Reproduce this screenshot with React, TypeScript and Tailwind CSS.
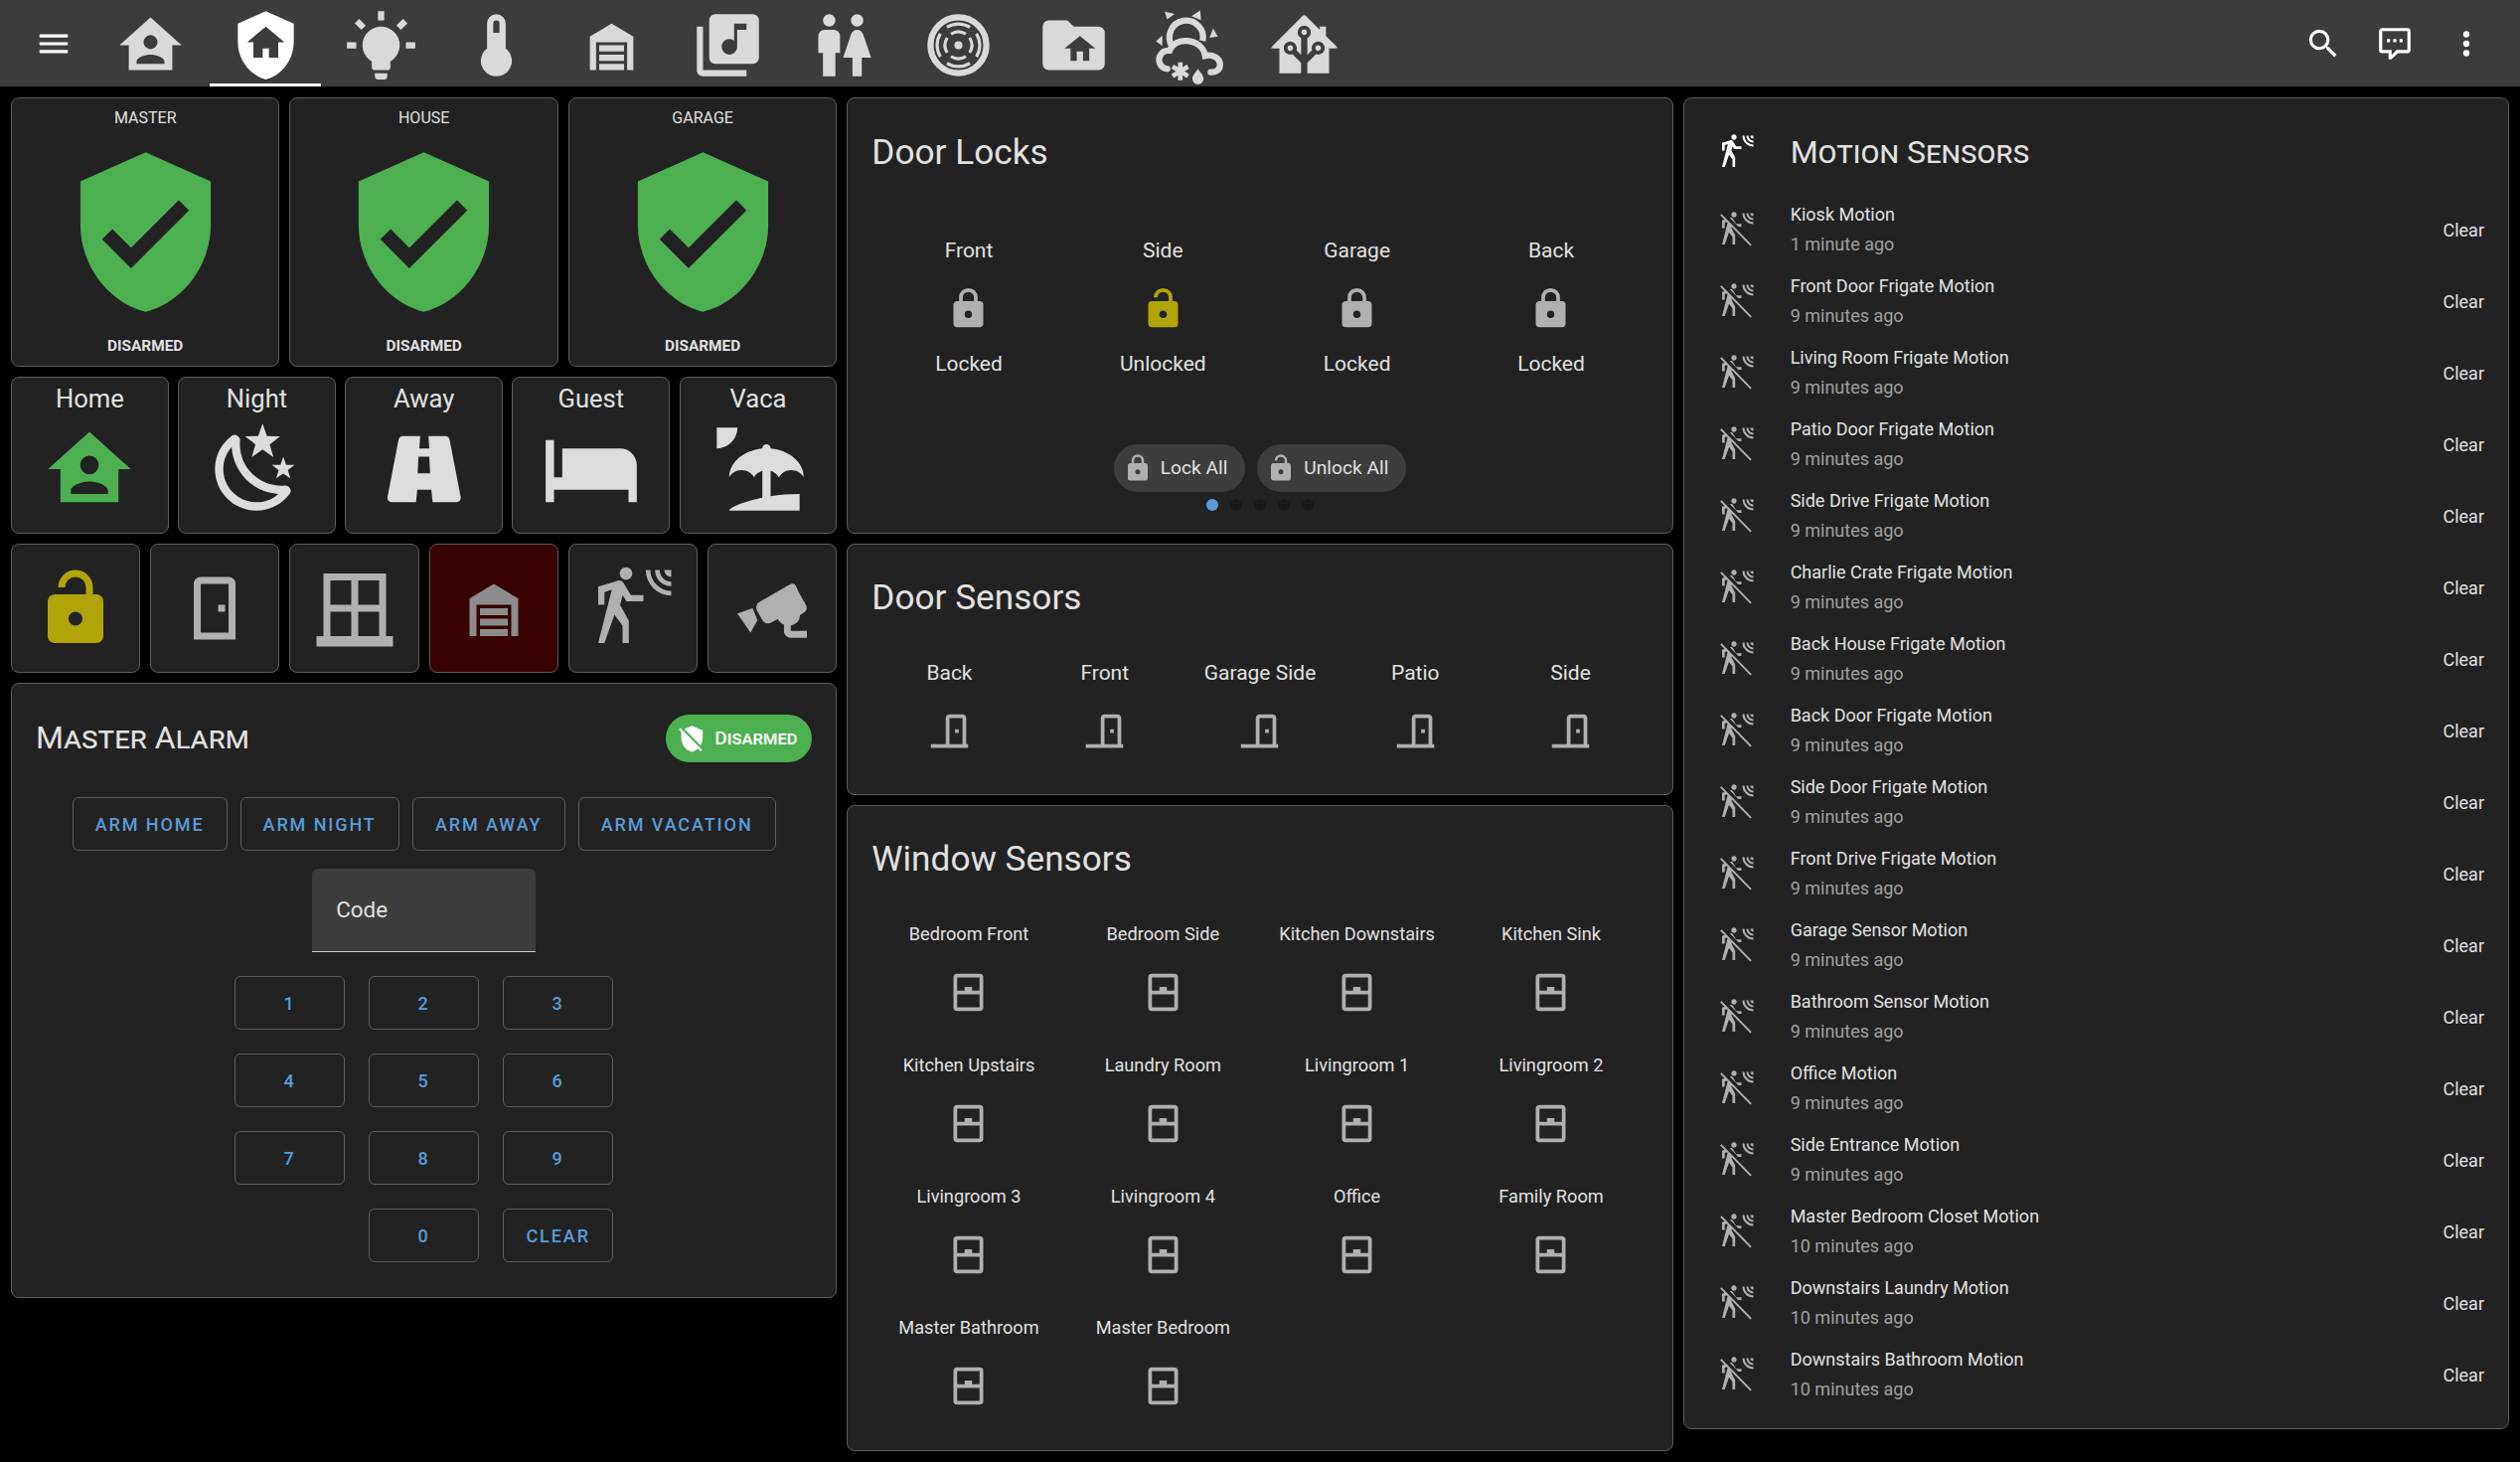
const menu = "M3,6H21V8H3V6M3,11H21V13H3V11M3,16H21V18H3V16Z"
const magnify = "M9.5,3A6.5,6.5 0 0,1 16,9.5C16,11.11 15.41,12.59 14.44,13.73L14.71,14H15.5L20.5,19L19,20.5L14,15.5V14.71L13.73,14.44C12.59,15.41 11.11,16 9.5,16A6.5,6.5 0 0,1 3,9.5A6.5,6.5 0 0,1 9.5,3M9.5,5C7,5 5,7 5,9.5C5,12 7,14 9.5,14C12,14 14,12 14,9.5C14,7 12,5 9.5,5Z"
const dots = "M12,16A2,2 0 0,1 14,18A2,2 0 0,1 12,20A2,2 0 0,1 10,18A2,2 0 0,1 12,16M12,10A2,2 0 0,1 14,12A2,2 0 0,1 12,14A2,2 0 0,1 10,12A2,2 0 0,1 12,10M12,4A2,2 0 0,1 14,6A2,2 0 0,1 12,8A2,2 0 0,1 10,6A2,2 0 0,1 12,4Z"
const comment = "M9,22A1,1 0 0,1 8,21V18H4A2,2 0 0,1 2,16V4C2,2.89 2.9,2 4,2H20A2,2 0 0,1 22,4V16A2,2 0 0,1 20,18H13.9L10.2,21.71C10,21.9 9.75,22 9.5,22V22H9M10,16V19.08L13.08,16H20V4H4V16H10M17,11H15V9H17V11M13,11H11V9H13V11M9,11H7V9H9V11Z"
const homeAccount = "M12,3L2,12H5V20H19V12H22L12,3M12,8.75A2.25,2.25 0 0,1 14.25,11A2.25,2.25 0 0,1 12,13.25A2.25,2.25 0 0,1 9.75,11A2.25,2.25 0 0,1 12,8.75M12,15C13.5,15 16.5,15.75 16.5,17.25V18H7.5V17.25C7.5,15.75 10.5,15 12,15Z"
const shieldHome = "M11 13H13V16H16V11H18L12 6L6 11H8V16H11V13M12 1L21 5V11C21 16.55 17.16 21.74 12 23C6.84 21.74 3 16.55 3 11V5L12 1Z"
const bulb = "M12,6A6,6 0 0,1 18,12C18,14.22 16.79,16.16 15,17.2V19A1,1 0 0,1 14,20H10A1,1 0 0,1 9,19V17.2C7.21,16.16 6,14.22 6,12A6,6 0 0,1 12,6M14,21V22A1,1 0 0,1 13,23H11A1,1 0 0,1 10,22V21H14M20,11H23V13H20V11M1,11H4V13H1V11M13,1V4H11V1H13M4.92,3.5L7.05,5.64L5.63,7.05L3.5,4.93L4.92,3.5M16.95,5.63L19.07,3.5L20.5,4.93L18.37,7.05L16.95,5.63Z"
const thermo = "M15 13V5A3 3 0 0 0 9 5V13A5 5 0 1 0 15 13M12 4A1 1 0 0 1 13 5V8H11V5A1 1 0 0 1 12 4Z"
const garage = "M12 5L19 9.2V20H17V11H7V20H5V9.2L12 5M8 12H16V14H8V12M8 15H16V17H8V15M8 18H16V20H8V18Z"
const music = "M20 2H8C6.9 2 6 2.9 6 4V16C6 17.1 6.9 18 8 18H20C21.1 18 22 17.1 22 16V4C22 2.9 21.1 2 20 2M18 7H15V12.5C15 13.88 13.88 15 12.5 15S10 13.88 10 12.5 11.12 10 12.5 10C13.07 10 13.58 10.19 14 10.5V5H18V7M4 6H2V20C2 21.1 2.9 22 4 22H18V20H4V6Z"
const people = "M7.5,2A2,2 0 0,1 9.5,4A2,2 0 0,1 7.5,6A2,2 0 0,1 5.5,4A2,2 0 0,1 7.5,2M6,7H9A2,2 0 0,1 11,9V14.5H9.5V22H5.5V14.5H4V9A2,2 0 0,1 6,7M16.5,2A2,2 0 0,1 18.5,4A2,2 0 0,1 16.5,6A2,2 0 0,1 14.5,4A2,2 0 0,1 16.5,2M15,22V16H12L14.59,8.41C14.84,7.59 15.6,7 16.5,7C17.4,7 18.16,7.59 18.41,8.41L21,16H18V22H15Z"
const folderHome = "M20,6H12L10,4H4A2,2 0 0,0 2,6V18A2,2 0 0,0 4,20H20A2,2 0 0,0 22,18V8A2,2 0 0,0 20,6M17,13V17H15V14H13V17H11V13H9L14,9L19,13H17Z"
const homeAssistant = "M21.8,13H20V21H13V17.67L15.79,14.88L16.5,15C17.66,15 18.6,14.06 18.6,12.9C18.6,11.74 17.66,10.8 16.5,10.8A2.1,2.1 0 0,0 14.4,12.9L14.5,13.61L13,15.13V9.65C13.66,9.29 14.1,8.6 14.1,7.8A2.1,2.1 0 0,0 12,5.7A2.1,2.1 0 0,0 9.9,7.8C9.9,8.6 10.34,9.29 11,9.65V15.13L9.5,13.61L9.6,12.9A2.1,2.1 0 0,0 7.5,10.8A2.1,2.1 0 0,0 5.4,12.9A2.1,2.1 0 0,0 7.5,15L8.21,14.88L11,17.67V21H4V13H2.25C1.83,13 1.42,13 1.42,12.79C1.43,12.57 1.85,12.15 2.28,11.72L11,3C11.33,2.67 11.67,2.33 12,2.33C12.33,2.33 12.67,2.67 13,3L17,7V6H19V9L21.78,11.78C22.18,12.18 22.59,12.59 22.6,12.8C22.6,13 22.2,13 21.8,13M7.5,12A0.9,0.9 0 0,1 8.4,12.9A0.9,0.9 0 0,1 7.5,13.8A0.9,0.9 0 0,1 6.6,12.9A0.9,0.9 0 0,1 7.5,12M16.5,12C17,12 17.4,12.4 17.4,12.9C17.4,13.4 17,13.8 16.5,13.8A0.9,0.9 0 0,1 15.6,12.9A0.9,0.9 0 0,1 16.5,12M12,6.9C12.5,6.9 12.9,7.3 12.9,7.8C12.9,8.3 12.5,8.7 12,8.7C11.5,8.7 11.1,8.3 11.1,7.8C11.1,7.3 11.5,6.9 12,6.9Z"
const shieldCheck = "M10,17L6,13L7.41,11.59L10,14.17L16.59,7.58L18,9M12,1L3,5V11C3,16.55 6.84,21.74 12,23C17.16,21.74 21,16.55 21,11V5L12,1Z"
const shieldOff = "M1,4.27L2.28,3L20.5,21.22L19.23,22.5L17,20.25C15.57,21.57 13.87,22.54 12,23C6.84,21.74 3,16.55 3,11V6.27L1,4.27M12,1L21,5V11C21,13.28 20.35,15.5 19.23,17.41L5.65,3.82L12,1Z"
const night = "M17.75,4.09L15.22,6.03L16.13,9.09L13.5,7.28L10.87,9.09L11.78,6.03L9.25,4.09L12.44,4L13.5,1L14.56,4L17.75,4.09M21.25,11L19.61,12.25L20.2,14.23L18.5,13.06L16.8,14.23L17.39,12.25L15.75,11L17.81,10.95L18.5,9L19.19,10.95L21.25,11M18.97,15.95C19.8,15.87 20.69,17.05 20.16,17.8C19.84,18.25 19.5,18.67 19.08,19.07C15.17,23 8.84,23 4.94,19.07C1.03,15.17 1.03,8.83 4.94,4.93C5.34,4.53 5.76,4.17 6.21,3.85C6.96,3.32 8.14,4.21 8.06,5.04C7.79,7.9 8.75,10.87 10.95,13.06C13.14,15.26 16.1,16.22 18.97,15.95M17.33,17.97C14.5,17.81 11.7,16.64 9.53,14.5C7.36,12.31 6.2,9.5 6.04,6.68C3.23,9.82 3.34,14.64 6.35,17.66C9.37,20.67 14.19,20.78 17.33,17.97Z"
const road = "M18.1,4.8C18,4.3 17.6,4 17.1,4H13L13.2,7H10.8L11,4H6.8C6.3,4 5.9,4.4 5.8,4.8L3.1,18.8C3,19.4 3.5,20 4.1,20H10L10.3,17H13.7L14,20H19.8C20.4,20 20.9,19.4 20.8,18.8L18.1,4.8M10.4,13L10.6,9H13.2L13.4,13H10.4Z"
const bed = "M19 7H5V14H3V5H1V20H3V17H21V20H23V11C23 8.79 21.21 7 19 7Z"
const beach = "M15,18.54C17.13,18.21 19.5,18 22,18V22H5C5,21.35 8.2,19.86 13,18.9V12.4C12.16,12.65 11.45,13.21 11,13.95C10.39,12.93 9.27,12.25 8,12.25C6.73,12.25 5.61,12.93 5,13.95C5.03,10.37 8.5,7.43 13,7.04V7A1,1 0 0,1 14,6A1,1 0 0,1 15,7V7.04C19.5,7.43 22.96,10.37 23,13.95C22.39,12.93 21.27,12.25 20,12.25C18.73,12.25 17.61,12.93 17,13.95C16.55,13.21 15.84,12.65 15,12.39V18.54M7,2A5,5 0 0,1 2,7V2H7Z"
const lockOpen = "M18,8A2,2 0 0,1 20,10V20A2,2 0 0,1 18,22H6C4.89,22 4,21.1 4,20V10A2,2 0 0,1 6,8H15V6A3,3 0 0,0 12,3A3,3 0 0,0 9,6H7A5,5 0 0,1 12,1A5,5 0 0,1 17,6V8H18M12,17A2,2 0 0,0 14,15A2,2 0 0,0 12,13A2,2 0 0,0 10,15A2,2 0 0,0 12,17Z"
const lock = "M12,17A2,2 0 0,0 14,15C14,13.89 13.1,13 12,13A2,2 0 0,0 10,15A2,2 0 0,0 12,17M18,8A2,2 0 0,1 20,10V20A2,2 0 0,1 18,22H6A2,2 0 0,1 4,20V10C4,8.89 4.9,8 6,8H7V6A5,5 0 0,1 12,1A5,5 0 0,1 17,6V8H18M12,3A3,3 0 0,0 9,6V8H15V6A3,3 0 0,0 12,3Z"
const door = "M8,3C6.89,3 6,3.89 6,5V21H18V5C18,3.89 17.11,3 16,3H8M8,5H16V19H8V5M13,11V13H15V11H13Z"
const doorClosed = "M12 3C10.89 3 10 3.89 10 5V19H2V21H22V19H21V5C21 3.89 20.11 3 19 3H12M12 5H19V19H12V5M17 11V13H15V11H17Z"
const windowClosed = "M21 20V2H3V20H1V23H23V20M19 4V11H13V4M5 4H11V11H5M5 20V13H11V20M13 20V13H19V20Z"
const windowSensor = "M6 2H18A2 2 0 0 1 20 4V20A2 2 0 0 1 18 22H6A2 2 0 0 1 4 20V4A2 2 0 0 1 6 2M6 4V11H10V9H14V11H18V4H6M6 13V20H18V13H6Z"
const motion = "M10 0.2C9 .2 8.2 1 8.2 2C8.2 3 9 3.8 10 3.8C11 3.8 11.8 3 11.8 2C11.8 1 11 .2 10 .2M15.67 1A7.33 7.33 0 0 0 23 8.33V7A6 6 0 0 1 17 1H15.67M18.33 1C18.33 3.58 20.42 5.67 23 5.67V4.33C21.15 4.33 19.67 2.85 19.67 1H18.33M21 1A2 2 0 0 0 23 3V1H21M7.92 4.03C7.75 4.03 7.58 4.06 7.42 4.11L2 5.8V11H3.8V7.33L5.91 6.67L2 22H3.8L6.67 13.89L9 17V22H10.8V15.59L8.31 11.05L9.04 8.18L10.12 10H15V8.2H11.38L9.38 4.87C9.08 4.37 8.54 4.03 7.92 4.03Z"
const cctv = "M18.15 4.94C17.77 4.91 17.37 5 17 5.2L8.43 10.15C7.5 10.69 7.18 11.87 7.72 12.8L9.22 15.4C9.75 16.32 10.94 16.64 11.86 16.1L13.6 15.1C14 15.8 14.6 16.4 15.4 16.7V18.5C15.4 19.6 16.3 20.5 17.4 20.5H22V18.5H17.4V16.9C18.1 16.8 18.8 16.4 19.3 15.9C19.8 15.4 20 14.7 20 14L21.1 13.3C21.9 12.8 22.2 11.8 21.7 11L19.6 7.3C19.3 6.6 18.8 5.1 18.15 4.94M2 13.5L6.4 12L7.8 15.4L5.8 19Z"

function Mdi({ d, className }: { d: string; className: string }) {
  return (
    <svg viewBox="0 0 24 24" className={`shrink-0 fill-current ${className}`}>
      <path d={d} />
    </svg>
  )
}

function Radar({ className }: { className: string }) {
  return (
    <svg viewBox="0 0 24 24" className={`shrink-0 fill-none stroke-current ${className}`}>
      <circle cx="12" cy="12" r="9" strokeWidth="2" />
      <circle cx="12" cy="12" r="1" className="fill-current" strokeWidth="0.6" />
      <path strokeWidth="1" d="M9.6 8.4a4.4 4.4 0 0 1 4.8 0M9.6 15.6a4.4 4.4 0 0 0 4.8 0M8.4 9.6a4.4 4.4 0 0 0 0 4.8M15.6 9.6a4.4 4.4 0 0 1 0 4.8" />
      <path strokeWidth="1" d="M8.3 6.2a7 7 0 0 1 7.4 0M8.3 17.8a7 7 0 0 0 7.4 0M6.2 8.3a7 7 0 0 0 0 7.4M17.8 8.3a7 7 0 0 1 0 7.4" />
    </svg>
  )
}

function Weather({ className }: { className: string }) {
  return (
    <svg viewBox="0 0 24 24" className={`shrink-0 overflow-visible ${className}`}>
      <path className="fill-current" d="M4.2 1.2L7.4 1.9L5 3.7ZM15.6 0.8L15.9 3.9L12.8 2.6ZM19.8 6.6L21.3 9.2L18.6 9.6ZM1.4 10.7L3.4 8.9L3.4 12.2Z" />
      <path className="fill-none stroke-current" strokeWidth="2" d="M6.6 12.4A5.4 5.4 0 1 1 16.4 10.6" />
      <path className="fill-none stroke-current" strokeWidth="2" strokeLinecap="round" d="M5 19.6C2.6 19.4 1.8 16.8 2.8 15.2C3.4 14 4.6 13.6 5.8 13.7C6.8 11.4 9 10.4 11.4 10.6C14.4 10.8 16.8 12.6 17.2 15.4C19.4 14.8 22 16 22 18.2C22 20 20.6 20.8 19 20.7" />
      <path className="fill-none stroke-current" strokeWidth="1.5" d="M9.2 17.5V23.3M6.7 18.9L11.7 21.9M6.7 21.9L11.7 18.9" />
      <path className="fill-current" d="M14.9 19.6C15.6 20.8 16.7 21.6 16.7 22.8A1.8 1.8 0 0 1 13.1 22.8C13.1 21.6 14.2 20.8 14.9 19.6Z" />
    </svg>
  )
}

function MotionOff({ className }: { className: string }) {
  return (
    <svg viewBox="0 0 24 24" className={`shrink-0 fill-current ${className}`}>
      <path d={motion} />
      <path d="M2.2 0.9L22.4 21.6" className="stroke-[#222222]" strokeWidth="2.6" />
      <path d="M1.2 1.9L21.4 22.6" className="stroke-current" strokeWidth="1.3" />
    </svg>
  )
}

function Card({ className, children }: { className: string; children?: React.ReactNode }) {
  return <div className={`rounded-[8px] border-[1.5px] border-[#5c5c5c] bg-[#222222] ${className}`}>{children}</div>
}

function OutlineButton({ label, className }: { label: string; className: string }) {
  return (
    <button className={`flex h-[54px] items-center justify-center rounded-[6px] border-[1.5px] border-[#5c5c5c] text-[18px] font-medium tracking-[1.9px] text-[#5a9bd8] ${className}`}>
      {label}
    </button>
  )
}

const tabs = [
  homeAccount,
  shieldHome,
  bulb,
  thermo,
  garage,
  music,
  people,
  "radar",
  folderHome,
  "weather",
  homeAssistant,
]

const locks = [
  { name: "Front", state: "Locked" },
  { name: "Side", state: "Unlocked" },
  { name: "Garage", state: "Locked" },
  { name: "Back", state: "Locked" },
]

const doors = ["Back", "Front", "Garage Side", "Patio", "Side"]

const windows = [
  "Bedroom Front",
  "Bedroom Side",
  "Kitchen Downstairs",
  "Kitchen Sink",
  "Kitchen Upstairs",
  "Laundry Room",
  "Livingroom 1",
  "Livingroom 2",
  "Livingroom 3",
  "Livingroom 4",
  "Office",
  "Family Room",
  "Master Bathroom",
  "Master Bedroom",
]

const motions = [
  ["Kiosk Motion", "1 minute ago"],
  ["Front Door Frigate Motion", "9 minutes ago"],
  ["Living Room Frigate Motion", "9 minutes ago"],
  ["Patio Door Frigate Motion", "9 minutes ago"],
  ["Side Drive Frigate Motion", "9 minutes ago"],
  ["Charlie Crate Frigate Motion", "9 minutes ago"],
  ["Back House Frigate Motion", "9 minutes ago"],
  ["Back Door Frigate Motion", "9 minutes ago"],
  ["Side Door Frigate Motion", "9 minutes ago"],
  ["Front Drive Frigate Motion", "9 minutes ago"],
  ["Garage Sensor Motion", "9 minutes ago"],
  ["Bathroom Sensor Motion", "9 minutes ago"],
  ["Office Motion", "9 minutes ago"],
  ["Side Entrance Motion", "9 minutes ago"],
  ["Master Bedroom Closet Motion", "10 minutes ago"],
  ["Downstairs Laundry Motion", "10 minutes ago"],
  ["Downstairs Bathroom Motion", "10 minutes ago"],
]

const modes = [
  { name: "Home", icon: homeAccount, color: "text-[#4caf50]" },
  { name: "Night", icon: night, color: "text-[#dcdcdc]" },
  { name: "Away", icon: road, color: "text-[#dcdcdc]" },
  { name: "Guest", icon: bed, color: "text-[#dcdcdc]" },
  { name: "Vaca", icon: beach, color: "text-[#dcdcdc]" },
]

export default function App() {
  return (
    <div className="h-screen overflow-hidden bg-black font-['Roboto',sans-serif] text-[#e1e1e1]">
      <header className="flex h-[87px] items-center bg-[#3c3c3c]">
        <div className="flex w-[93px] pl-[35px] text-white">
          <Mdi d={menu} className="size-[38px]" />
        </div>
        {tabs.map((tab, i) => (
          <div key={i} className={`relative flex h-[87px] w-[116.2px] items-center justify-center pt-[4px] ${i === 1 ? "text-white" : "text-[#d9d9d9]"}`}>
            {tab === "radar" ? (
              <Radar className="size-[75px]" />
            ) : tab === "weather" ? (
              <Weather className="size-[75px]" />
            ) : (
              <Mdi d={tab} className="size-[75px]" />
            )}
            {i === 1 && <span className="absolute bottom-0 left-[2px] h-[3px] w-[112px] bg-white" />}
          </div>
        ))}
        <div className="ml-auto flex items-center gap-[34px] pr-[35px] text-white">
          <Mdi d={magnify} className="size-[38px]" />
          <Mdi d={comment} className="size-[38px]" />
          <Mdi d={dots} className="size-[38px]" />
        </div>
      </header>

      <main className="grid grid-cols-3 gap-x-[10px] px-[11px] pt-[11px]">
        <div className="flex flex-col gap-[10px]">
          <div className="grid grid-cols-3 gap-[10px]">
            {["MASTER", "HOUSE", "GARAGE"].map((name) => (
              <Card key={name} className="flex h-[271px] flex-col items-center pt-[8px]">
                <div className="text-[16px] leading-[24px]">{name}</div>
                <Mdi d={shieldCheck} className="mt-[15px] size-[175px] text-[#4caf50]" />
                <div className="mt-[15px] text-[15.4px] leading-[24px] font-bold">DISARMED</div>
              </Card>
            ))}
          </div>

          <div className="grid grid-cols-5 gap-[9.5px]">
            {modes.map((m) => (
              <Card key={m.name} className="flex h-[158px] flex-col items-center pt-[5px]">
                <div className="text-[25.6px] leading-[32px]">{m.name}</div>
                <Mdi d={m.icon} className={`mt-[5px] size-[100px] ${m.color}`} />
              </Card>
            ))}
          </div>

          <div className="grid grid-cols-6 gap-[10px]">
            <Card className="flex h-[130px] items-center justify-center">
              <Mdi d={lockOpen} className="size-[84px] text-[#b0a408]" />
            </Card>
            <Card className="flex h-[130px] items-center justify-center">
              <Mdi d={door} className="size-[84px] text-[#b0b0b0]" />
            </Card>
            <Card className="flex h-[130px] items-center justify-center">
              <Mdi d={windowClosed} className="size-[84px] text-[#b0b0b0]" />
            </Card>
            <Card className="flex h-[130px] items-center justify-center !bg-[#380000]">
              <Mdi d={garage} className="size-[84px] text-[#8c8c8c]" />
            </Card>
            <Card className="flex h-[130px] items-center justify-center">
              <Mdi d={motion} className="size-[84px] text-[#b0b0b0]" />
            </Card>
            <Card className="flex h-[130px] items-center justify-center">
              <Mdi d={cctv} className="size-[84px] text-[#b0b0b0]" />
            </Card>
          </div>

          <Card className="flex h-[619px] flex-col items-center px-[24px] pt-[31px]">
            <div className="flex w-full items-center justify-between">
              <h2 className="mb-[2px] text-[32px] leading-[46px] [font-variant:small-caps]">Master Alarm</h2>
              <div className="flex h-[48px] w-[147px] items-center rounded-full bg-[#4caf50] pl-[12px] text-white">
                <Mdi d={shieldOff} className="size-[28.8px]" />
                <span className="ml-[8px] text-[19.2px] font-medium [font-variant:small-caps]">Disarmed</span>
              </div>
            </div>
            <div className="mt-[35px] flex gap-[13px]">
              <OutlineButton label="ARM HOME" className="w-[156px]" />
              <OutlineButton label="ARM NIGHT" className="w-[160px]" />
              <OutlineButton label="ARM AWAY" className="w-[154px]" />
              <OutlineButton label="ARM VACATION" className="w-[199px]" />
            </div>
            <div className="mt-[18px] flex h-[84px] w-[225px] items-center rounded-t-[6px] border-b-[1.5px] border-[#c8c8c8] bg-[#3d3d3d] pl-[24px] text-[22.4px]">
              Code
            </div>
            <div className="mt-[24px] grid grid-cols-[111px_111px_111px] gap-[24px]">
              {["1", "2", "3", "4", "5", "6", "7", "8", "9"].map((n) => (
                <OutlineButton key={n} label={n} className="w-[111px]" />
              ))}
              <OutlineButton label="0" className="col-start-2 w-[111px]" />
              <OutlineButton label="CLEAR" className="w-[111px]" />
            </div>
          </Card>
        </div>

        <div className="flex flex-col gap-[10px]">
          <Card className="flex h-[439px] flex-col px-[24px] pt-[30px]">
            <h2 className="text-[35.2px] leading-[48px]">Door Locks</h2>
            <div className="mt-[59px] grid grid-cols-4">
              {locks.map((l) => (
                <div key={l.name} className="flex flex-col items-center text-[21px] leading-[32px]">
                  <div>{l.name}</div>
                  <Mdi d={l.state === "Locked" ? lock : lockOpen} className={`mt-[19.5px] size-[45px] ${l.state === "Locked" ? "text-[#b0b0b0]" : "text-[#b0a408]"}`} />
                  <div className="mt-[17.5px]">{l.state}</div>
                </div>
              ))}
            </div>
            <div className="mt-[65px] flex justify-center gap-[12px]">
              <div className="flex h-[48px] items-center rounded-full bg-[#3d3d3d] pr-[18px] pl-[9px] text-[19.2px]">
                <Mdi d={lock} className="size-[30px] text-[#b0b0b0]" />
                <span className="ml-[8px]">Lock All</span>
              </div>
              <div className="flex h-[48px] items-center rounded-full bg-[#3d3d3d] pr-[18px] pl-[9px] text-[19.2px]">
                <Mdi d={lockOpen} className="size-[30px] text-[#b0b0b0]" />
                <span className="ml-[8px]">Unlock All</span>
              </div>
            </div>
            <div className="mt-[7px] flex justify-center gap-[12px]">
              <span className="size-[12px] rounded-full bg-[#5a9bd8]" />
              <span className="size-[12px] rounded-full bg-[#191919]" />
              <span className="size-[12px] rounded-full bg-[#191919]" />
              <span className="size-[12px] rounded-full bg-[#191919]" />
              <span className="size-[12px] rounded-full bg-[#191919]" />
            </div>
          </Card>

          <Card className="flex h-[253px] flex-col px-[24px] pt-[29px]">
            <h2 className="text-[35.2px] leading-[48px]">Door Sensors</h2>
            <div className="mt-[35.5px] grid grid-cols-5">
              {doors.map((name) => (
                <div key={name} className="flex flex-col items-center text-[21px] leading-[32px]">
                  <div>{name}</div>
                  <Mdi d={doorClosed} className="mt-[20.5px] size-[45px] text-[#b0b0b0]" />
                </div>
              ))}
            </div>
          </Card>

          <Card className="flex h-[650px] flex-col px-[24px] pt-[29px]">
            <h2 className="text-[35.2px] leading-[48px]">Window Sensors</h2>
            <div className="mt-[35.5px] grid grid-cols-4 gap-y-[35px]">
              {windows.map((name) => (
                <div key={name} className="flex flex-col items-center text-[18.2px] leading-[32px]">
                  <div>{name}</div>
                  <Mdi d={windowSensor} className="mt-[20px] size-[45px] text-[#b0b0b0]" />
                </div>
              ))}
            </div>
          </Card>
        </div>

        <Card className="h-[1340px] px-[24px] pt-[30px]">
          <div className="flex h-[48px] items-center pl-[11px] text-white">
            <Mdi d={motion} className="size-[36px]" />
            <h2 className="ml-[36px] text-[32px] leading-[48px] text-[#e1e1e1] [font-variant:small-caps]">Motion Sensors</h2>
          </div>
          <div className="mt-[18px]">
            {motions.map(([name, time]) => (
              <div key={name} className="flex h-[72px] items-center pl-[11px]">
                <MotionOff className="size-[36px] text-[#b0b0b0]" />
                <div className="ml-[36px] text-[18px] leading-[30px]">
                  <div>{name}</div>
                  <div className="text-[#a0a0a0]">{time}</div>
                </div>
                <div className="ml-auto text-[18px]">Clear</div>
              </div>
            ))}
          </div>
        </Card>
      </main>
    </div>
  )
}
